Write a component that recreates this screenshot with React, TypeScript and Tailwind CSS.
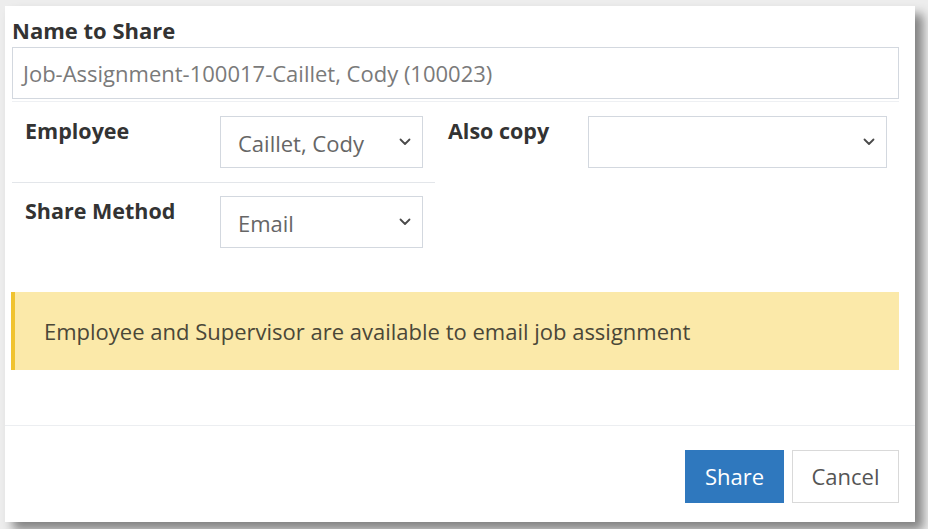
import React from "react";

function Chevron() {
  return (
    <svg width="12" height="8" viewBox="0 0 12 8" className="shrink-0">
      <polyline points="1.5,1.5 6,6 10.5,1.5" fill="none" stroke="#4a4a4a" strokeWidth="1.8" strokeLinecap="round" strokeLinejoin="round" />
    </svg>
  );
}

function Select({ value, w }: { value: string; w: string }) {
  return (
    <div className={`${w} h-[52px] border border-[#d3d8df] bg-white flex items-center justify-between pl-[17px] pr-[11px]`}>
      <span className="text-[22px] text-[#666] leading-none pt-[1px]">{value}</span>
      <Chevron />
    </div>
  );
}

export default function App() {
  return (
    <div
      className="w-[928px] h-[529px] bg-[#ededed] overflow-hidden pt-[6px] pl-[5px]"
      style={{ fontFamily: '"Open Sans", "Noto Sans", sans-serif' }}
    >
      <div className="w-[910px] h-[516px] bg-white flex flex-col shadow-[8px_8px_10px_rgba(0,0,0,0.45)]">
        <div className="pl-[7px] pr-[16px] pt-[11px] flex-1">
          <div className="text-[22px] font-bold text-[#333] leading-[26px]">Name to Share</div>
          <div className="mt-[4px] h-[52px] border border-[#d3d8df] flex items-center pl-[10px]">
            <span className="text-[22px] text-[#7a7a7a] leading-none">Job-Assignment-100017-Caillet, Cody (100023)</span>
          </div>
          <div className="mt-[2px] h-px bg-[#eef0f3]" />
          <div className="flex mt-[14px]">
            <div className="w-[423px]">
              <div className="flex items-start pl-[13px] pb-[14px] border-b border-[#e3e6ea]">
                <div className="w-[195px] text-[21.5px] font-bold text-[#333] leading-[26px] pt-[2px]">Employee</div>
                <Select value="Caillet, Cody" w="w-[203px]" />
              </div>
              <div className="flex items-start pl-[13px] pt-[13px]">
                <div className="w-[195px] text-[21.5px] font-bold text-[#333] leading-[26px] pt-[2px]">Share Method</div>
                <Select value="Email" w="w-[203px]" />
              </div>
            </div>
            <div className="flex items-start pl-[13px]">
              <div className="w-[140px] text-[21.5px] font-bold text-[#333] leading-[26px] pt-[2px]">Also copy</div>
              <Select value="" w="w-[299px]" />
            </div>
          </div>
          <div className="mt-[44px] ml-[-1px] w-[888px] h-[78px] bg-[#fbe9a9] border-l-[4px] border-[#f0c330] flex items-center pl-[29px]">
            <span className="text-[22px] text-[#4a4738] leading-none">Employee and Supervisor are available to email job assignment</span>
          </div>
        </div>
        <div className="h-[97px] border-t border-[#eceef1] flex justify-end items-start pt-[24px] pr-[16px] gap-[8px]">
          <button className="w-[99px] h-[53px] bg-[#2f78be] text-white text-[22px]">Share</button>
          <button className="w-[107px] h-[53px] bg-white border border-[#d9d9d9] text-[#555] text-[22px]">Cancel</button>
        </div>
      </div>
    </div>
  );
}
